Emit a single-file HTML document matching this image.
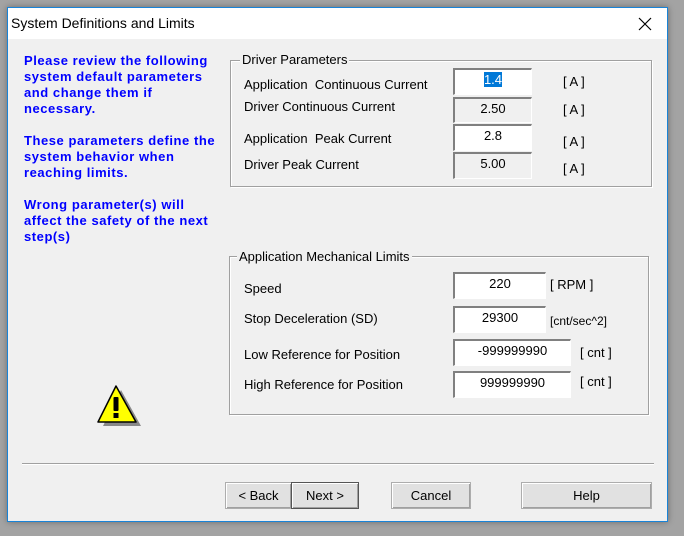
<!DOCTYPE html><html><head><style>
body{margin:0;width:684px;height:536px;background:#a3a3a3;position:relative;overflow:hidden;font-family:"Liberation Sans",Arial,sans-serif;font-size:13px;color:#000}
.a{position:absolute}
#win{left:7px;top:7px;width:659px;height:513px;background:#f0f0f0;border:1px solid #1883d7;box-shadow:0 0 6px rgba(0,0,0,.35)}
#tb{left:0;top:0;width:659px;height:31px;background:#fff}
.blue{color:#0000ff;font-weight:bold;font-size:13px;line-height:16px;letter-spacing:0.55px}
.grp{border:1px solid #a0a0a0;box-shadow:inset 1px 1px 0 #fff,1px 1px 0 #fff}
.gl{background:#f0f0f0;padding:0 2px}
.tx{background:#fff;border-top:2px solid #808080;border-left:2px solid #808080;border-bottom:1px solid #fff;border-right:1px solid #fff;box-sizing:border-box;text-align:center;line-height:20px}
.ro{background:#f0f0f0}
.btn{border:1px solid #adadad;background:#e1e1e1;box-sizing:border-box;text-align:center;line-height:25px;box-shadow:inset 1px 1px 0 #fff,inset -1px -1px 0 #a0a0a0}
</style></head><body>
<div id="win" class="a">
<div id="tb" class="a"><div class="a" style="left:3px;top:7px;font-size:14px">System Definitions and Limits</div>
<svg class="a" style="left:630px;top:9px" width="14" height="14"><path d="M1 1L13 13M13 1L1 13" stroke="#000" stroke-width="1.2"/></svg></div>
</div>
<div class="a blue" style="left:24px;top:53px;width:196px">Please review the following system default parameters and change them if necessary.<br><br>These parameters define the system behavior when reaching limits.<br><br>Wrong parameter(s) will affect the safety of the next step(s)</div>

<div class="a grp" style="left:230px;top:60px;width:420px;height:125px"></div>
<div class="a gl" style="left:240px;top:52px">Driver Parameters</div>
<div class="a" style="left:244px;top:77px">Application&nbsp; Continuous Current</div>
<div class="a" style="left:244px;top:99px">Driver Continuous Current</div>
<div class="a" style="left:244px;top:131px">Application&nbsp; Peak Current</div>
<div class="a" style="left:244px;top:157px">Driver Peak Current</div>
<div class="a tx" style="left:453px;top:68px;width:79px;height:27px"><span style="background:#0078d7;color:#fff">1.4</span></div>
<div class="a tx ro" style="left:453px;top:97px;width:79px;height:26px">2.50</div>
<div class="a tx" style="left:453px;top:124px;width:79px;height:27px">2.8</div>
<div class="a tx ro" style="left:453px;top:152px;width:79px;height:27px">5.00</div>
<div class="a" style="left:563px;top:74px">[ A ]</div>
<div class="a" style="left:563px;top:102px">[ A ]</div>
<div class="a" style="left:563px;top:134px">[ A ]</div>
<div class="a" style="left:563px;top:161px">[ A ]</div>

<div class="a grp" style="left:229px;top:256px;width:418px;height:157px"></div>
<div class="a gl" style="left:237px;top:249px">Application Mechanical Limits</div>
<div class="a" style="left:244px;top:281px">Speed</div>
<div class="a" style="left:244px;top:311px">Stop Deceleration (SD)</div>
<div class="a" style="left:244px;top:347px">Low Reference for Position</div>
<div class="a" style="left:244px;top:377px">High Reference for Position</div>
<div class="a tx" style="left:453px;top:272px;width:93px;height:27px">220</div>
<div class="a tx" style="left:453px;top:306px;width:93px;height:27px">29300</div>
<div class="a tx" style="left:453px;top:339px;width:118px;height:27px">-999999990</div>
<div class="a tx" style="left:453px;top:371px;width:118px;height:27px">999999990</div>
<div class="a" style="left:550px;top:277px">[ RPM ]</div>
<div class="a" style="left:550px;top:314px;font-size:12px">[cnt/sec^2]</div>
<div class="a" style="left:580px;top:345px">[ cnt ]</div>
<div class="a" style="left:580px;top:374px">[ cnt ]</div>

<svg class="a" style="left:96px;top:384px" width="46" height="44"><polygon points="23,4 43,40 5,40" fill="#888" transform="translate(2,2)"/><polygon points="20,2 40,38 2,38" fill="#ffff00" stroke="#000" stroke-width="1.5" stroke-linejoin="round"/><rect x="17.5" y="13" width="5" height="14" fill="#000" rx="1"/><rect x="17.5" y="29" width="5" height="5" fill="#000"/></svg>

<div class="a" style="left:22px;top:463px;width:632px;height:1px;background:#a0a0a0;border-bottom:1px solid #fff"></div>
<div class="a btn" style="left:225px;top:482px;width:67px;height:27px">&lt; Back</div>
<div class="a btn" style="left:291px;top:482px;width:68px;height:27px;border-color:#555">Next &gt;</div>
<div class="a btn" style="left:391px;top:482px;width:80px;height:27px">Cancel</div>
<div class="a btn" style="left:521px;top:482px;width:131px;height:27px">Help</div>
</body></html>
